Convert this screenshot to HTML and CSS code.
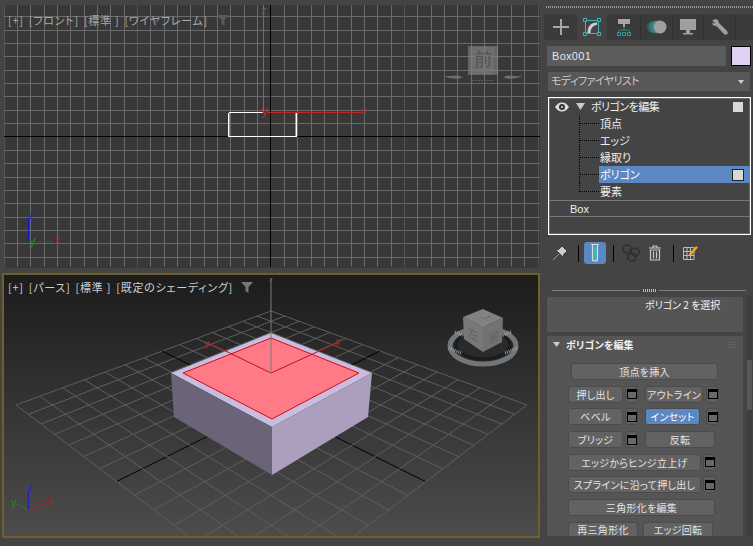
FILE: index.html
```html
<!DOCTYPE html>
<html lang="ja">
<head>
<meta charset="utf-8">
<title>3ds Max</title>
<link rel="stylesheet" href="styles.css">
</head>
<body>
<div class="app">
  <div class="views">
    <section class="view view-front">
      <svg class="canvas" width="536" height="263" viewBox="4 5 536 263">
        <g id="frontgrid" fill="none" shape-rendering="crispEdges"></g>
        <g shape-rendering="crispEdges" fill="none">
          <path d="M4 136.5H540M270.5 5V267" stroke="#000"/>
          <path d="M263 5V112" stroke="#6e6e6e"/>
          <path d="M228.5 112.5H263M296.5 112.5V136.5H228.5V112.5" stroke="#fff" stroke-width="1"/>
          <path d="M229.5 113V136M295.5 113V136" stroke="#fff" stroke-opacity=".45"/>
          <path d="M267 112.5H362" stroke="#c42323"/>
          <path d="M28.5 218V241" stroke="#1414d0"/>
          <path d="M29 241.5H54" stroke="#a81c1c"/>
        </g>
        <text class="ax" x="261" y="14" fill="#5c5c5c">z</text>
        <text class="ax big" x="261" y="115" fill="#b82a2a">y</text>
        <text class="ax" x="361" y="114" fill="#b03030">x</text>
        <text class="ax" x="28" y="219" fill="#2020d8">z</text>
        <text class="ax big" x="29" y="245" fill="#169016">y</text>
        <text class="ax big" x="54" y="244" fill="#a82222">x</text>
      </svg>
      <div class="vlabel dim">
        <span>[+]</span><span>[フロント]</span><span>[標準 ]</span><span>[ワイヤフレーム]</span>
        <svg class="filter f1" width="12" height="11" viewBox="0 0 12 11"><path d="M0 0H12L7.5 5V11L4.5 9V5Z" fill="#5a5a5a"/></svg>
      </div>
      <svg class="cube" width="100" height="60" viewBox="430 30 100 60">
        <rect x="468" y="46" width="30" height="29" fill="#8a8a8a" fill-opacity=".55"/>
        <rect x="472" y="47" width="22" height="27" fill="#777" fill-opacity=".5"/>
        <text x="483" y="66" class="cubetext" fill="#555">前</text>
        <path d="M443 76.500 458 75.500 463 77 458 79 450 78ZM523 76.500 508 75.500 503 77 508 79 516 78Z" fill="#6d6f70"/>
        <path d="M472 80.500H494" stroke="#5c5e60" stroke-width="1" stroke-dasharray="2 1"/>
      </svg>
    </section>
    <section class="view view-persp">
      <svg class="canvas" width="534" height="261" viewBox="4 275 534 261">
        <g id="pgrid" fill="none"></g>
        <path d="M171 373 271 333 372 373 272 427Z" fill="#c9bddf"/>
        <path d="M171 373 272 427V475L174 417Z" fill="#6b6479"/>
        <path d="M372 373 272 427V475L368 417Z" fill="#ab9fbd"/>
        <path d="M183 373 271 338 359 373 272 419Z" fill="#ff7a87" stroke="#d30a14" stroke-width="1"/>
        <path d="M271 373 207 342M271 373 339 342" stroke="#c2101c" fill="none"/>
        <path d="M271 279V373" stroke="#7a7a7a"/>
        <text class="ax small" x="271" y="282" text-anchor="middle" fill="#6a6a6a">z</text>
        <text class="ax" x="204" y="347" fill="#a82a2a">y</text>
        <text class="ax" x="335" y="345" fill="#a82a2a">x</text>
        <path d="M28.300 510.500V491" stroke="#1a1ad0"/>
        <path d="M28.300 510.500 47 502" stroke="#c01a1a"/>
        <path d="M28.300 510.500 17 504" stroke="#168a16"/>
        <text class="ax" x="27" y="491" fill="#2424d0">z</text>
        <text class="ax" x="47" y="504" fill="#a82222">x</text>
        <text class="ax" x="11" y="506" fill="#169016">y</text>
        <ellipse cx="483" cy="346" rx="33" ry="18" fill="#2a2a2a" stroke="#70767a" stroke-width="5"/>
        <ellipse cx="483" cy="345" rx="27" ry="14" fill="none" stroke="#1c1c1c" stroke-width="3"/>
        <path d="M449 348l12 5M517 348l-12 5M455 332l10 4M511 332l-10 4" stroke="#999" stroke-width="3" stroke-dasharray="1 1"/>
        <path d="M463 317 483 309 503 318 483 327Z" fill="#828282"/>
        <path d="M463 317 483 327V352L464 339Z" fill="#787878"/>
        <path d="M503 318 483 327V352L502 342Z" fill="#727272"/>
        <text class="cubetext sm" transform="matrix(.85 .4 0 1 473 339)" fill="#626262">左</text>
        <text class="cubetext sm" transform="matrix(.85 -.4 0 1 494 342)" fill="#626262">前</text>
        <text class="cubetext sm" transform="matrix(.7 .3 -.7 .3 484 319)" fill="#666">上</text>
      </svg>
      <div class="vlabel">
        <span>[+]</span><span>[パース]</span><span>[標準 ]</span><span>[既定のシェーディング]</span>
        <svg class="filter f2" width="12" height="11" viewBox="0 0 12 11"><path d="M0 0H12L7.500 5V11L4.500 9V5Z" fill="#777"/></svg>
      </div>
    </section>
  </div>

  <aside class="panel">
    <div class="dots"></div>
    <nav class="tabs">
      <div class="tab t33"><svg width="18" height="18" viewBox="0 0 18 18"><path d="M9 1V17M1 9H17" stroke="#a6a6a6" stroke-width="2"/></svg></div>
      <div class="tab t30 active"><svg width="18" height="18" viewBox="0 0 18 18"><path d="M2.500 2.500H15.500V15.500H2.500Z" fill="none" stroke="#3fb5b5"/><path d="M4.500 15C4.500 8.500 8 4.500 14 4.500V7C10.500 7 7.500 10 7.500 15Z" fill="#d0d0d0"/><path d="M.5 .5H3.500V3.500H.5ZM14.500 .5H17.500V3.500H14.500ZM.5 14.500H3.500V17.500H.5ZM14.500 14.500H17.500V17.500H14.500Z" fill="#444" stroke="#3fb5b5"/></svg></div>
      <div class="tab t33 sep"><svg width="14" height="18" viewBox="0 0 14 18"><rect x="1" y="1" width="12" height="5" fill="#a6a6a6"/><rect x="6" y="6" width="2" height="3" fill="#a6a6a6"/><path d="M7 9V13M2 15V12H12V15" fill="none" stroke="#357f7f"/><path d="M.5 14.500H3.500V17.500H.5ZM5.500 14.500H8.500V17.500H5.500ZM10.500 14.500H13.500V17.500H10.500Z" fill="none" stroke="#3a9a9a"/></svg></div>
      <div class="tab t32 sep"><svg width="20" height="14" viewBox="0 0 20 14"><circle cx="6" cy="7" r="6" fill="#2c6464"/><circle cx="9" cy="7" r="6.500" fill="#3c7f7f"/><circle cx="13" cy="7" r="6.500" fill="#a0a0a0"/></svg></div>
      <div class="tab t31 sep"><svg width="18" height="16" viewBox="0 0 18 16"><rect x="1" y="0" width="16" height="11" fill="#a0a0a0"/><rect x="7" y="11" width="4" height="3" fill="#a0a0a0"/><rect x="4" y="14" width="10" height="1.500" fill="#a0a0a0"/></svg></div>
      <div class="tab t32 sep"><svg width="18" height="18" viewBox="0 0 18 18"><path d="M1 3 4 1 7 2 8 5 16 13 17 15 15 17 13 16 5.500 8 2.500 7.500 0.500 5 3 5.500 4 4.500Z" fill="#a0a0a0"/></svg></div>
      <div class="tab tend sep"></div>
    </nav>
    <div class="namerow">
      <div class="nameinput">Box001</div>
      <div class="swatch"></div>
    </div>
    <div class="dropdown"><span>モディファイヤリスト</span><svg width="6" height="4" viewBox="0 0 6 4"><path d="M0 0H6L3 4Z" fill="#ccc"/></svg></div>

    <div class="stack">
      <div class="srow top">
        <svg class="eye" width="14" height="10" viewBox="0 0 14 10"><path d="M0 5C3 1 5 .5 7 .5S11 1 14 5C11 9 9 9.500 7 9.500S3 9 0 5Z" fill="#ddd"/><circle cx="7" cy="5" r="3" fill="#333"/><circle cx="7" cy="5" r="1" fill="#ddd"/></svg>
        <svg class="tri" width="9" height="7" viewBox="0 0 9 7"><path d="M0 0H9L4.500 7Z" fill="#ccc"/></svg>
        <span class="stext">ポリゴンを編集</span>
        <i class="sq plain"></i>
      </div>
      <div class="srow sub"><i class="tick"></i><span class="slabel"><b>頂点</b></span></div>
      <div class="srow sub"><i class="tick"></i><span class="slabel"><b>エッジ</b></span></div>
      <div class="srow sub"><i class="tick"></i><span class="slabel"><b>縁取り</b></span></div>
      <div class="srow sub"><i class="tick"></i><span class="slabel selected"><b>ポリゴン</b><i class="sq"></i></span></div>
      <div class="srow sub"><i class="tick last"></i><span class="slabel"><b>要素</b></span></div>
      <div class="srow base">Box</div>
    </div>

    <div class="toolbar">
      <div class="tool"><svg width="16" height="16" viewBox="0 0 16 16"><path d="M1 15 7 9" stroke="#999"/><path d="M6 6 10 2 14 6 10 10Z M5 5 11 11" fill="#ccc" stroke="#ccc"/></svg></div>
      <i class="tsep m7"></i>
      <div class="tool on m5"><svg width="10" height="18" viewBox="0 0 10 18"><path d="M1 .5H9M2.500 1V15.500Q2.500 17 5 17T7.500 15.500V1" fill="none" stroke="#ddd" stroke-width="1.200"/><rect x="3.500" y="3" width="3" height="13" fill="#2ec4b6"/></svg></div>
      <i class="tsep m7"></i>
      <div class="tool m6"><svg width="18" height="18" viewBox="0 0 18 18"><circle cx="5" cy="5" r="4" fill="none" stroke="#2e2e2e" stroke-width="1.500"/><circle cx="13" cy="8" r="4" fill="none" stroke="#2e2e2e" stroke-width="1.500"/><circle cx="10" cy="13" r="4" fill="none" stroke="#2e2e2e" stroke-width="1.500"/></svg></div>
      <div class="tool m2"><svg width="14" height="16" viewBox="0 0 14 16"><path d="M1 3H13M5 3V1H9V3M2.500 5H11.500V15H2.500ZM5.500 6.500V13.500M8.500 6.500V13.500" fill="none" stroke="#c8c8c8" stroke-width="1.200"/></svg></div>
      <i class="tsep m7"></i>
      <div class="tool m5"><svg width="16" height="16" viewBox="0 0 16 16"><path d="M1.500 2.500H12V14.500H1.500ZM1.500 6.500H12M1.500 10.500H12M5 2.500V14.500M8.500 2.500V14.500" fill="none" stroke="#bbb"/><path d="M7 9 14 1 16 2.500 9 10.500 6.500 11Z" fill="#f0a818"/></svg></div>
    </div>

    <div class="divider"><i></i><b></b><i></i></div>

    <div class="rollarea">
      <div class="rollouts">
        <div class="roll info"><span>ポリゴン 2 を選択</span></div>
        <div class="roll edit">
          <div class="rhead">
            <svg width="7" height="5" viewBox="0 0 7 5"><path d="M0 0H7L3.500 5Z" fill="#ccc"/></svg>
            <strong>ポリゴンを編集</strong>
            <i class="grip"></i>
          </div>
          <div class="btns">
            <div class="brow in3"><button class="w147">頂点を挿入</button></div>
            <div class="brow"><button class="w55">押し出し</button><span class="box"><i></i></span><button class="w58 g7">アウトライン</button><span class="box g3"><i></i></span></div>
            <div class="brow"><button class="w55">ベベル</button><span class="box"><i></i></span><button class="w55 g7 blue">インセット</button><span class="box g6"><i></i></span></div>
            <div class="brow"><button class="w55">ブリッジ</button><span class="box"><i></i></span><button class="w70 g7">反転</button></div>
            <div class="brow"><button class="w133">エッジからヒンジ立上げ</button><span class="box"><i></i></span></div>
            <div class="brow"><button class="w133">スプラインに沿って押し出し</button><span class="box"><i></i></span></div>
            <div class="brow"><button class="w147">三角形化を編集</button></div>
            <div class="brow"><button class="w70 cut">再三角形化</button><button class="w70 g5 cut">エッジ回転</button></div>
          </div>
        </div>
      </div>
      <div class="scroll"><i></i></div>
    </div>
  </aside>
</div>
<script src="grid.js"></script>
</body>
</html>
```

FILE: styles.css
```css
* { box-sizing: border-box; }
html, body { margin: 0; height: 100%; background: #444; }
body {
  font-family: "Noto Sans CJK JP", "Liberation Sans", sans-serif;
  font-size: 11px;
  font-feature-settings: "palt";
  color: #e6e6e6;
  overflow: hidden;
}
.app { display: flex; width: 753px; height: 546px; background: #444; overflow: hidden; }

/* viewports */
.views { width: 544px; flex: none; padding: 5px 0 0 2px; display: flex; flex-direction: column; }
.view { position: relative; overflow: hidden; flex: none; }
.view-front { margin-left: 2px; width: 536px; height: 263px; background: #383838; }
.view-persp {
  margin-top: 5px; width: 538px; height: 265px;
  border: 2px solid #6f5f2b;
  background: linear-gradient(#1c1c1c, #4c4c4c);
}
.canvas { display: block; }
.cube { position: absolute; left: 426px; top: 25px; }
.cubetext { font-family: "Noto Sans CJK JP", sans-serif; font-size: 18px; text-anchor: middle; }
.cubetext.sm { font-size: 13px; }
.ax { font-family: "Liberation Sans", sans-serif; font-size: 11px; }
.ax.big { font-size: 13px; }
.ax.small { font-size: 7px; }
.vlabel {
  position: absolute; left: 4px; top: 8px; height: 14px;
  display: flex; align-items: center; gap: 5px;
  white-space: nowrap; line-height: 14px; color: #cfcfcf;
  letter-spacing: .75px;
}
.vlabel.dim { color: #a8a8a8; }
.view-persp .vlabel { top: 5px; left: 4px; }
.f1 { margin-left: 4px; }
.f2 { margin-left: 3px; }

/* command panel */
.panel { width: 209px; flex: none; padding-top: 6px; position: relative; }
.dots {
  height: 2px; margin-left: 2px;
  background: repeating-linear-gradient(90deg, #9a9a9a 0 1px, transparent 1px 2px);
}
.tabs { display: flex; height: 26px; margin-top: 6px; background: #3a3a3a; }
.tab { display: flex; align-items: center; justify-content: center; height: 26px; flex: none; position: relative; }
.t33 { width: 33px; }
.t30 { width: 30px; }
.t32 { width: 32px; }
.t31 { width: 31px; }
.tend { flex: 1; }
.tab.active { background: #444; }
.tab.sep + .tab.sep { border-left: 1px solid #2f2f2f; background-clip: padding-box; }

.namerow { display: flex; gap: 5px; margin: 6px 2px 0 3px; height: 20px; }
.nameinput { flex: 1; background: #5c5c5c; color: #dfe6f2; line-height: 21px; padding-left: 5px; font-family: "Liberation Sans", sans-serif; font-size: 11px; letter-spacing: .3px; }
.swatch { width: 20px; background: #e0d2f2; border: 1px solid #000; }
.dropdown {
  display: flex; align-items: center; justify-content: space-between;
  height: 19px; margin: 6px 3px 0 4px; padding: 0 6px 0 3px;
  background: #585858; color: #c8c8c8; letter-spacing: -.55px; line-height: 17px;
}
.dropdown span { position: relative; top: -1px; }

.stack {
  height: 138px; margin: 6px 2px 0 4px;
  border: 1px solid #fff;
  box-shadow: inset 0 0 0 .5px rgba(255,255,255,.4);
  background: #444;
}
.srow { display: flex; align-items: center; height: 17px; color: #f0f0f0; }
.top { padding-left: 6px; }
.tri { margin-left: 7px; }
.stext { margin-left: 6px; flex: 1; letter-spacing: -.5px; position: relative; top: -1px; }
.sq { display: block; width: 12px; height: 12px; background: #d8d8d8; border: 1px solid #222; }
.sq.plain { width: 10px; height: 10px; border: 0; margin-right: 7px; }
.sub { padding-left: 30px; }
.tick {
  flex: none; align-self: flex-start; width: 20px; height: 17px;
  border-left: 1px dotted #000;
  background: linear-gradient(90deg, #000 50%, transparent 50%) 0 8px / 2px 1px repeat-x;
}
.tick.last { height: 9px; }
.slabel { flex: 1; height: 17px; display: flex; align-items: center; justify-content: space-between; padding: 0 6px 0 1px; }
.slabel b { font-weight: 400; position: relative; top: -1px; }
.selected { background: #5b87c2; color: #fff; }
.base {
  height: 17px; margin-top: 0;
  border-top: 1px solid #7a7a7a; border-bottom: 1px solid #7a7a7a;
  padding-left: 21px; font-family: "Liberation Sans", sans-serif;
}

.toolbar { display: flex; align-items: center; height: 22px; margin: 7px 0 0 5px; }
.tool { width: 22px; height: 22px; display: flex; align-items: center; justify-content: center; flex: none; border-radius: 3px; }
.tool.on { background: #5b87c2; }
.tsep { display: block; width: 1px; height: 17px; background: #000; flex: none; }
.m2 { margin-left: 2px; }
.m5 { margin-left: 5px; }
.m6 { margin-left: 6px; }
.m7 { margin-left: 7px; }

.divider { display: flex; align-items: center; gap: 3px; height: 3px; margin: 25px 7px 0 8px; }
.divider i { flex: 1; height: 1px; background: #7d7d7d; }
.divider b { width: 13px; height: 3px; background: repeating-linear-gradient(90deg, #bbb 0 1px, transparent 1px 2px); }

.rollarea { display: flex; gap: 4px; margin: 5px 1px 0 3px; height: 239px; }
.rollouts { width: 196px; flex: none; display: flex; flex-direction: column; gap: 4px; }
.roll { background: #555; border-radius: 2px; overflow: hidden; }
.info { height: 35px; padding: 0 0 0 98px; font-size: 10px; line-height: 16px; color: #f2f2f2; }
.edit { height: 200px; }
.rhead { display: flex; align-items: center; height: 17px; padding-left: 6px; }
.rhead strong { margin-left: 6px; font-weight: 700; font-size: 10px; flex: 1; color: #f0f0f0; letter-spacing: .1px; }
.grip {
  width: 7px; height: 7px; margin-right: 8px;
  background: radial-gradient(circle, #888 0 .7px, transparent .8px) 0 0 / 2.500px 2.500px;
}
.btns { display: flex; flex-direction: column; gap: 5.700px; padding: 10px 0 0 21px; }
.brow { display: flex; height: 17px; flex: none; }
.in3 { padding-left: 3px; }
button {
  display: block; height: 17px; padding: 0; flex: none;
  font: inherit; font-size: 10px; font-feature-settings: "palt"; color: #e2e2e2; letter-spacing: .3px; line-height: 15px;
  background: #626262; border: 1px solid #4b4b4b; border-radius: 3px;
  white-space: nowrap; overflow: hidden;
}
button.cut { height: 14px; line-height: 13px; border-bottom: 0; border-radius: 3px 3px 0 0; }
button.blue { background: #5b87c2; color: #fff; }
.w55 { width: 55px; }
.w58 { width: 58px; }
.w70 { width: 70px; }
.w133 { width: 133px; }
.w147 { width: 147px; }
.g3 { margin-left: 3px !important; }
.g5 { margin-left: 5px; }
.g6 { margin-left: 6px !important; }
.g7 { margin-left: 7px; }
.box {
  display: flex; align-items: center; justify-content: center; flex: none;
  width: 13px; height: 17px; margin-left: 2px;
  background: #5e5e5e; border: 1px solid #4b4b4b; border-radius: 3px;
}
.box i { display: block; width: 10px; height: 10px; background: #686868; border: 1px solid #000; border-top-width: 3px; }
.scroll { width: 5px; flex: none; background: #3e3e3e; padding-top: 63px; }
.scroll i { display: block; height: 50px; background: #585858; }
```

FILE: grid.js
```js
// Grid lines of the two viewports, computed from their spacing and corner points.
(function () {
  var front = "";
  var step = 13.35;
  for (var k = -21; k <= 21; k++) {
    if (k === 0) continue;
    var x = Math.round(270.5 + k * step) + 0.5;
    var y = Math.round(136.5 + k * step) + 0.5;
    var heavy = k % 10 === 0;
    if (x > 4 && x < 540) front += '<path d="M' + x + ' 5V267" stroke="' + (heavy ? "#545454" : "#6a6a6a") + '"/>';
    if (y > 5 && y < 267) front += '<path d="M4 ' + y + 'H540" stroke="#6a6a6a"/>';
  }
  document.getElementById("frontgrid").innerHTML = front;

  var T = [271, 311], R = [527, 405], B = [271, 599], L = [16, 405];
  var dx1 = R[0] - B[0], dx2 = L[0] - B[0], sx = T[0] - R[0] + B[0] - L[0];
  var dy1 = R[1] - B[1], dy2 = L[1] - B[1], sy = T[1] - R[1] + B[1] - L[1];
  var det = dx1 * dy2 - dx2 * dy1;
  var g = (sx * dy2 - dx2 * sy) / det, h = (dx1 * sy - sx * dy1) / det;
  var a = R[0] - T[0] + g * R[0], b = L[0] - T[0] + h * L[0], c = T[0];
  var d = R[1] - T[1] + g * R[1], e = L[1] - T[1] + h * L[1], f = T[1];
  function p(u, v) {
    var w = g * u + h * v + 1;
    return ((a * u + b * v + c) / w).toFixed(1) + " " + ((d * u + e * v + f) / w).toFixed(1);
  }
  var out = "", N = 14;
  for (var i = 0; i <= N; i++) {
    var t = i / N;
    var col = i === N / 2 ? "#000" : "#5e5e5e";
    out += '<path d="M' + p(t, 0) + "L" + p(t, 1) + '" stroke="' + col + '"/>';
    out += '<path d="M' + p(0, t) + "L" + p(1, t) + '" stroke="' + col + '"/>';
  }
  document.getElementById("pgrid").innerHTML = out;
})();
```
